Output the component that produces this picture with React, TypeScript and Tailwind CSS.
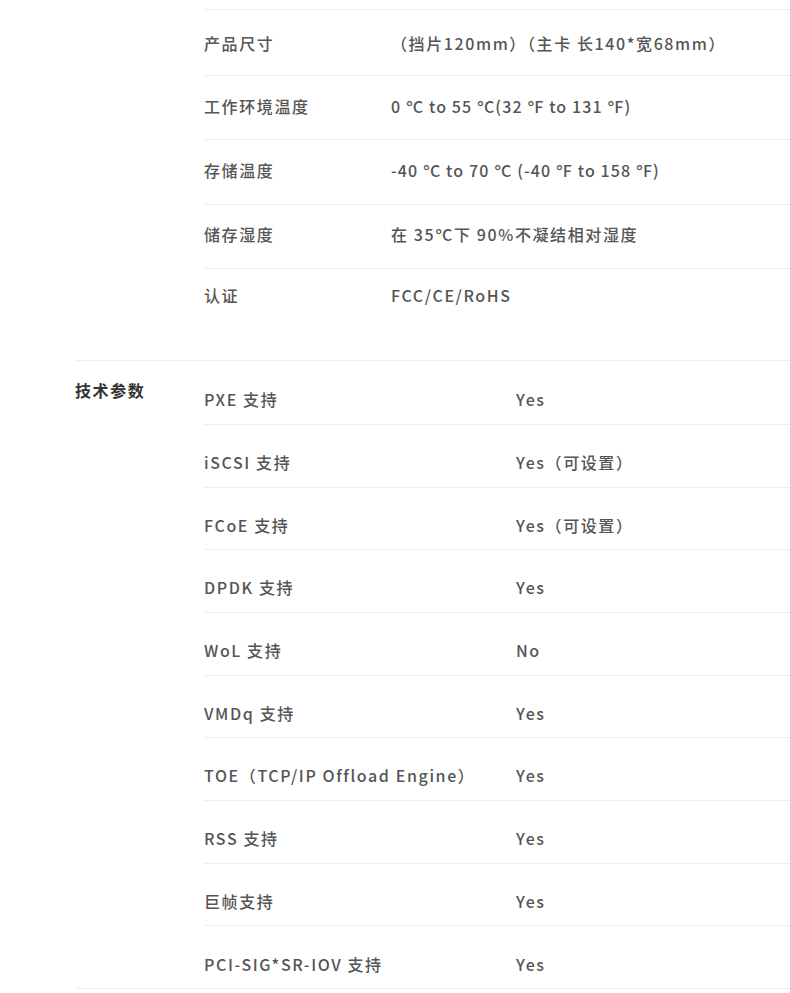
import React from "react";

const Deg = () => (
  <span style={{ fontFamily: '"Noto Sans", sans-serif' }} className="tracking-normal">
    °
  </span>
);

const spec1: { label: string; value: React.ReactNode; h: string; pt: string; vcls?: string; last?: boolean }[] = [
  { label: "产品尺寸", value: "（挡片120mm）（主卡 长140*宽68mm）", h: "h-[66px]", pt: "pt-[21px]" },
  {
    label: "工作环境温度",
    value: (
      <>
        0 <Deg />C to 55 <Deg />C(32 <Deg />F to 131 <Deg />F)
      </>
    ),
    h: "h-[64px]",
    pt: "pt-[18px]",
    vcls: "tracking-[0.07em]",
  },
  {
    label: "存储温度",
    value: (
      <>
        -40 <Deg />C to 70 <Deg />C (-40 <Deg />F to 158 <Deg />F)
      </>
    ),
    h: "h-[65px]",
    pt: "pt-[18px]",
    vcls: "tracking-[0.07em]",
  },
  {
    label: "储存湿度",
    value: (
      <>
        在 35<Deg />C下 90%不凝结相对湿度
      </>
    ),
    h: "h-[64px]",
    pt: "pt-[17px]",
  },
  { label: "认证", value: "FCC/CE/RoHS", h: "h-[91px]", pt: "pt-[14px]", last: true },
];

const spec2: { label: string; value: string }[] = [
  { label: "PXE 支持", value: "Yes" },
  { label: "iSCSI 支持", value: "Yes（可设置）" },
  { label: "FCoE 支持", value: "Yes（可设置）" },
  { label: "DPDK 支持", value: "Yes" },
  { label: "WoL 支持", value: "No" },
  { label: "VMDq 支持", value: "Yes" },
  { label: "TOE（TCP/IP Offload Engine）", value: "Yes" },
  { label: "RSS 支持", value: "Yes" },
  { label: "巨帧支持", value: "Yes" },
  { label: "PCI-SIG*SR-IOV 支持", value: "Yes" },
];

export default function App() {
  return (
    <div
      className="w-[790px] h-[993px] bg-white pl-[75px] text-[16px] leading-6 tracking-[0.1em] font-medium text-[#555] overflow-hidden"
      style={{ fontFamily: '"Noto Sans CJK SC", "Noto Sans", sans-serif' }}
    >
      {/* Section 1 */}
      <div className="flex">
        <div className="w-[129px] shrink-0" />
        <div className="flex-1 flex flex-col">
          <div className="h-[10px] border-b border-[#eeeeee]" />
          {spec1.map((r) => (
            <div
              key={r.label}
              className={`flex ${r.h} ${r.pt} ${r.last ? "" : "border-b border-[#eeeeee]"}`}
            >
              <div className="w-[187px] shrink-0">{r.label}</div>
              <div className={`flex-1 whitespace-nowrap ${r.vcls ?? ""}`}>{r.value}</div>
            </div>
          ))}
        </div>
      </div>

      {/* Section 2 */}
      <div className="flex border-t border-b border-[#eeeeee]">
        <div className="w-[129px] shrink-0 pt-[17px] font-bold text-[#333]">技术参数</div>
        <div className="flex-1 flex flex-col">
          {spec2.map((r, i) => (
            <div
              key={r.label}
              className={`flex ${i === 0 ? "h-[64px] pt-[26px]" : i === spec2.length - 1 ? "h-[62px] pt-[26px]" : "h-[62.67px] pt-[25px]"} ${
                i === spec2.length - 1 ? "" : "border-b border-[#eeeeee]"
              }`}
            >
              <div className="w-[312px] shrink-0 whitespace-nowrap">{r.label}</div>
              <div className="flex-1 whitespace-nowrap">{r.value}</div>
            </div>
          ))}
        </div>
      </div>
    </div>
  );
}
